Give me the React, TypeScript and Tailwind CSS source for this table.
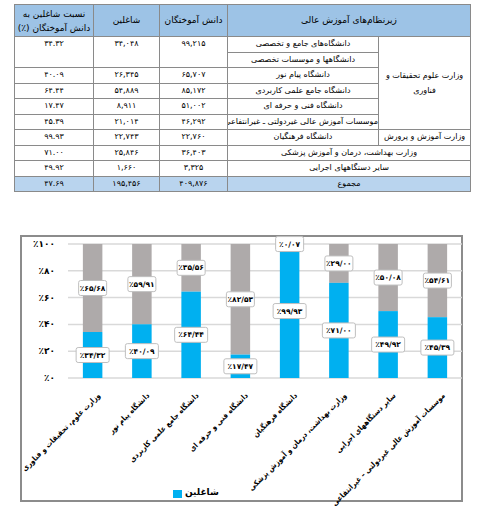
import React from "react";

const fa = { fontFamily: '"DejaVu Sans", "Noto Sans", sans-serif' };
const faCond = '"DejaVu Sans Condensed", "DejaVu Sans", sans-serif';

const rows = [
  { sub: "دانشگاه پیام نور", g: "۶۵,۷۰۷", e: "۲۶,۳۴۵", r: "۴۰.۰۹" },
  { sub: "دانشگاه جامع علمی کاربردی", g: "۸۵,۱۷۲", e: "۵۴,۸۸۹", r: "۶۴.۴۴" },
  { sub: "دانشگاه فنی و حرفه ای", g: "۵۱,۰۰۲", e: "۸,۹۱۱", r: "۱۷.۴۷" },
  { sub: "موسسات آموزش عالی غیردولتی ـ غیرانتفاعی", g: "۴۶,۲۹۲", e: "۲۱,۰۱۴", r: "۴۵.۳۹" },
];

const bars = [
  { name: "وزارت علوم، تحقیقات و فناوری", emp: "٪۳۴/۳۲", rest: "٪۶۵/۶۸", v: 34.32 },
  { name: "دانشگاه پیام نور", emp: "٪۴۰/۰۹", rest: "٪۵۹/۹۱", v: 40.09 },
  { name: "دانشگاه جامع علمی کاربردی", emp: "٪۶۴/۴۴", rest: "٪۳۵/۵۶", v: 64.44 },
  { name: "دانشگاه فنی و حرفه ای", emp: "٪۱۷/۴۷", rest: "٪۸۲/۵۳", v: 17.47 },
  { name: "دانشگاه فرهنگیان", emp: "٪۹۹/۹۳", rest: "٪۰/۰۷", v: 99.93 },
  { name: "وزارت بهداشت، درمان و آموزش پزشکی", emp: "٪۷۱/۰۰", rest: "٪۲۹/۰۰", v: 71 },
  { name: "سایر دستگاههای اجرایی", emp: "٪۴۹/۹۲", rest: "٪۵۰/۰۸", v: 49.92 },
  { name: "موسسات آموزش عالی غیردولتی – غیرانتفاعی", emp: "٪۴۵/۳۹", rest: "٪۵۴/۶۱", v: 45.39 },
];

const ticks = ["٪۱۰۰", "٪۸۰", "٪۶۰", "٪۴۰", "٪۲۰", "٪۰"];

const td = "border border-[#8a8a8a] text-center align-top leading-[13px] p-0 text-black";

function Table() {
  return (
    <table dir="rtl" className="table-fixed border-collapse border border-[#666] text-[8px]" style={{ ...fa, width: 456 }}>
      <colgroup>
        <col className="w-[92px]" />
        <col className="w-[151px]" />
        <col className="w-[68px]" />
        <col className="w-[66px]" />
        <col className="w-[79px]" />
      </colgroup>
      <thead>
        <tr className="h-[32px] bg-[#9dc3e6] text-[9px]">
          <th colSpan={2} className="border border-[#8a8a8a] font-normal">زیرنظام‌های آموزش عالی</th>
          <th className="border border-[#8a8a8a] font-normal">دانش آموختگان</th>
          <th className="border border-[#8a8a8a] font-normal">شاغلین</th>
          <th className="border border-[#8a8a8a] font-normal leading-[14px]">
            نسبت شاغلین به
            <br />
            دانش آموختگان (٪)
          </th>
        </tr>
      </thead>
      <tbody>
        <tr className="h-[15.5px]">
          <td rowSpan={6} className="border border-[#8a8a8a] text-center align-middle leading-[15px]">
            وزارت علوم تحقیقات و
            <br />
            فناوری
          </td>
          <td className={td}>دانشگاه‌های جامع و تخصصی</td>
          <td rowSpan={2} className={td}>۹۹,۲۱۵</td>
          <td rowSpan={2} className={td}>۳۴,۰۴۸</td>
          <td rowSpan={2} className={td}>۳۴.۳۲</td>
        </tr>
        <tr className="h-[15.5px]">
          <td className={td}>دانشگاهها و موسسات تخصصی</td>
        </tr>
        {rows.map((r) => (
          <tr key={r.sub} className="h-[15.5px]">
            <td className={td}>
              <div className="overflow-hidden whitespace-nowrap">{r.sub}</div>
            </td>
            <td className={td}>{r.g}</td>
            <td className={td}>{r.e}</td>
            <td className={td}>{r.r}</td>
          </tr>
        ))}
        <tr className="h-[15.5px]">
          <td className={td}>وزارت آموزش و پرورش</td>
          <td className={td}>دانشگاه فرهنگیان</td>
          <td className={td}>۲۲,۷۶۰</td>
          <td className={td}>۲۲,۷۴۳</td>
          <td className={td}>۹۹.۹۳</td>
        </tr>
        <tr className="h-[15.5px]">
          <td colSpan={2} className={td}>وزارت بهداشت، درمان و آموزش پزشکی</td>
          <td className={td}>۳۶,۴۰۳</td>
          <td className={td}>۲۵,۸۴۶</td>
          <td className={td}>۷۱.۰۰</td>
        </tr>
        <tr className="h-[15.5px]">
          <td colSpan={2} className={td}>سایر دستگاههای اجرایی</td>
          <td className={td}>۳,۳۲۵</td>
          <td className={td}>۱,۶۶۰</td>
          <td className={td}>۴۹.۹۲</td>
        </tr>
        <tr className="h-[15.5px] bg-[#b9d4ee]">
          <td colSpan={2} className={td}>مجموع</td>
          <td className={td}>۴۰۹,۸۷۶</td>
          <td className={td}>۱۹۵,۴۵۶</td>
          <td className={td}>۴۷.۶۹</td>
        </tr>
      </tbody>
    </table>
  );
}

function Chart() {
  const top = 244;
  const bottom = 378;
  const h = bottom - top;
  const x0 = 68;
  const step = 49.25;
  const bw = 19.5;
  return (
    <div className="ml-[20px] mt-[43px] h-[267px] w-[443px] border-2 border-[#8c8c8c]">
      <svg width={439} height={263} style={{ ...fa, overflow: "visible" }}>
        <g transform="translate(-22,-237)">
          {ticks.map((t, i) => {
            const y = top + (i * h) / 5;
            return (
              <g key={t}>
                <line x1={x0} x2={462} y1={y} y2={y} stroke="#d9d9d9" strokeWidth={1.5} />
                <text x={55} y={y} textAnchor="end" dominantBaseline="central" fontSize={9} fontWeight="bold" fill="#000">
                  {t}
                </text>
              </g>
            );
          })}
          {bars.map((b, i) => {
            const cx = x0 + i * step + step / 2;
            const yb = bottom - (b.v / 100) * h;
            const restW = b.rest.length > 6 ? 33 : 28;
            return (
              <g key={b.name}>
                <rect x={cx - bw / 2} y={top} width={bw} height={yb - top} fill="#aeaaaa" />
                <rect x={cx - bw / 2} y={yb} width={bw} height={bottom - yb} fill="#00b0f0" />
                <rect x={cx - restW / 2} y={(top + yb) / 2 - 7.5} width={restW} height={15} rx={2} fill="#fff" stroke="#bfbfbf" />
                <text x={cx} y={(top + yb) / 2} textAnchor="middle" dominantBaseline="central" fontSize={7.5} fontWeight="bold" fill="#000">
                  {b.rest}
                </text>
                <rect x={cx - 16.5} y={(yb + bottom) / 2 - 7.5} width={33} height={15} rx={2} fill="#fff" stroke="#bfbfbf" />
                <text x={cx} y={(yb + bottom) / 2} textAnchor="middle" dominantBaseline="central" fontSize={7.5} fontWeight="bold" fill="#000">
                  {b.emp}
                </text>
                <text
                  transform={`translate(${cx + 8},396) rotate(-45)`}
                  textAnchor="end"
                  fontSize={7.5}
                  fontWeight="bold"
                  fill="#000"
                  style={{ fontFamily: faCond }}
                >
                  {b.name}
                </text>
              </g>
            );
          })}
          <rect x={173} y={490} width={9} height={8} fill="#00b0f0" />
          <text x={185} y={492} fontSize={9} fontWeight="bold" fill="#000" dominantBaseline="central">
            شاغلین
          </text>
        </g>
      </svg>
    </div>
  );
}

export default function App() {
  return (
    <div className="h-[506px] w-[483px] overflow-hidden bg-white pt-[4px] pl-[14px]">
      <Table />
      <div className="-ml-[14px]">
        <Chart />
      </div>
    </div>
  );
}
